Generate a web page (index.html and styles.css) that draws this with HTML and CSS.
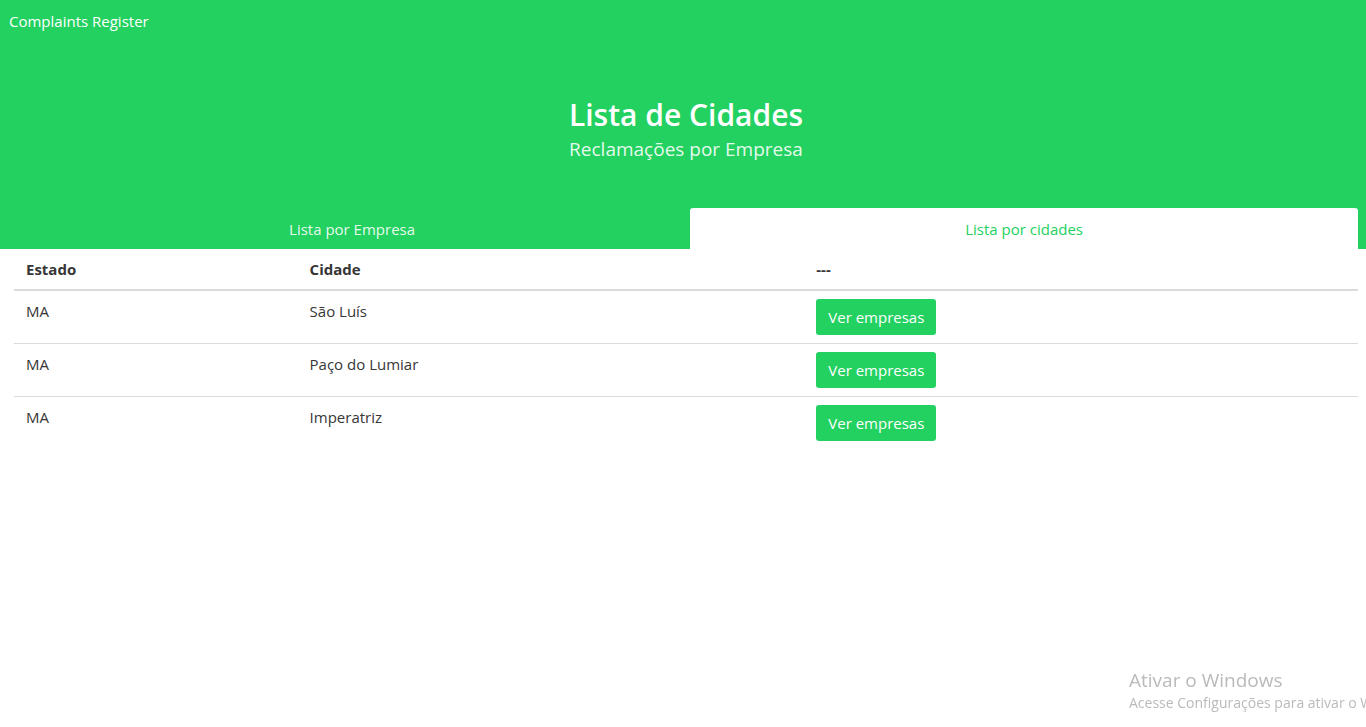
FILE: index.html
```html
<!DOCTYPE html>
<html lang="pt-BR">
<head>
<meta charset="utf-8">
<meta name="viewport" content="width=device-width, initial-scale=1">
<title>Complaints Register</title>
<link rel="stylesheet" href="styles.css">
</head>
<body>
<header class="hero">
  <nav class="navbar"><a class="brand" href="#">Complaints Register</a></nav>
  <div class="hero-body">
    <h1 class="title">Lista de Cidades</h1>
    <h2 class="subtitle">Reclamações por Empresa</h2>
  </div>
  <nav class="tabs">
    <a class="tab" href="#">Lista por Empresa</a>
    <a class="tab active" href="#" aria-current="page">Lista por cidades</a>
  </nav>
</header>
<main class="content">
  <table class="table">
    <colgroup><col class="col-state"><col class="col-city"><col></colgroup>
    <thead>
      <tr><th>Estado</th><th>Cidade</th><th>---</th></tr>
    </thead>
    <tbody>
      <tr><td>MA</td><td>São Luís</td><td><button class="button" type="button">Ver empresas</button></td></tr>
      <tr><td>MA</td><td>Paço do Lumiar</td><td><button class="button" type="button">Ver empresas</button></td></tr>
      <tr><td>MA</td><td>Imperatriz</td><td><button class="button" type="button">Ver empresas</button></td></tr>
    </tbody>
  </table>
</main>
<aside class="watermark">
  <p class="watermark-title">Ativar o Windows</p>
  <p class="watermark-text">Acesse Configurações para ativar o W</p>
</aside>
</body>
</html>
```
FILE: styles.css
```css
* {
  box-sizing: border-box;
}

body {
  margin: 0;
  background: #fff;
  color: #363636;
  font-family: "Open Sans", "Noto Sans", sans-serif;
  font-size: 15px;
  line-height: 24px;
}

h1, h2, p {
  margin: 0;
}

.hero {
  background: #23d160;
  color: #fff;
}

.navbar {
  display: flex;
  padding: 9px;
}

.brand {
  color: #fff;
  text-decoration: none;
}

.hero-body {
  padding: 55px 8px 43px 14px;
  text-align: center;
}

.title {
  font-size: 30px;
  font-weight: 600;
  line-height: 36px;
}

.subtitle {
  color: rgba(255, 255, 255, 0.9);
  font-size: 19px;
  font-weight: 400;
  line-height: 32px;
}

.tabs {
  display: flex;
  padding: 0 8px 0 14px;
}

.tab {
  flex: 1 0 auto;
  padding: 9px 16px 8px;
  border-radius: 3px 3px 0 0;
  color: rgba(255, 255, 255, 0.9);
  text-align: center;
  text-decoration: none;
}

.tab.active {
  background: #fff;
  color: #23d160;
}

.content {
  padding: 0 8px 0 14px;
}

.table {
  width: 100%;
  table-layout: fixed;
  border-spacing: 0;
}

.col-state {
  width: 21.1%;
}

.col-city {
  width: 37.7%;
}

.table th,
.table td {
  padding: 8px 12px;
  text-align: left;
  vertical-align: top;
}

.table th {
  border-bottom: 2px solid #dbdbdb;
  font-weight: 700;
}

.table td {
  border-bottom: 1px solid #dbdbdb;
}

.table tr:last-child td {
  border-bottom: 0;
}

.button {
  display: block;
  height: 36px;
  padding: 0 12px;
  border: 0;
  border-radius: 3px;
  background: #23d160;
  color: #fff;
  font: inherit;
}

.watermark {
  position: fixed;
  bottom: 13px;
  left: calc(100% - 237px);
  color: #bababa;
  white-space: nowrap;
  pointer-events: none;
}

.watermark-title {
  font-size: 19px;
}

.watermark-text {
  font-size: 14px;
  line-height: 22px;
}
```
